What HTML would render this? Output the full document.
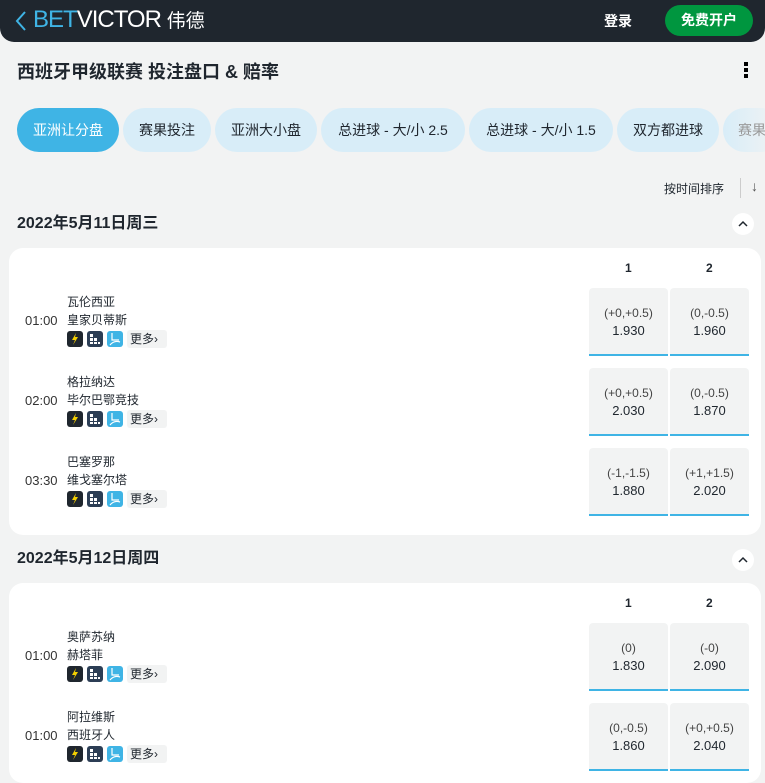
<!DOCTYPE html>
<html><head><meta charset="utf-8"><style>
*{margin:0;padding:0;box-sizing:border-box}
body{width:765px;height:773px;overflow:hidden;background:#f2f3f3;font-family:"Liberation Sans","Noto Sans CJK SC",sans-serif;color:#1f262e;position:relative}
.a{position:absolute}
.hdr{left:0;top:0;width:765px;height:42px;background:#1f262e;border-radius:0 0 14px 14px}
.tab{position:absolute;top:108px;height:44px;border-radius:22px;background:#d8edf8;font-size:14px;line-height:44px;text-align:center;color:#1f262e}
.card{position:absolute;left:9px;width:752px;background:#fff;border-radius:14px}
.odd{position:absolute;width:79px;height:68px;background:#f2f3f3;border-radius:4px 4px 0 0;border-bottom:2px solid #3fb4e5;text-align:center;font-size:12px}
.odd .h{margin-top:18px;color:#444;line-height:14px}
.odd .v{margin-top:4px;font-size:13px;color:#1f262e;line-height:14px}
.team{position:absolute;left:67px;font-size:12px;line-height:14px}
.time{position:absolute;left:25px;font-size:13px;color:#333}
.ic{position:absolute;width:16px;height:16px;border-radius:3px}
.more{position:absolute;width:40px;height:18px;background:#f2f3f3;border-radius:3px;font-size:12px;line-height:18px;padding-left:3px}
.col{position:absolute;font-size:12px;font-weight:bold}
.circ{position:absolute;width:22px;height:22px;border-radius:11px;background:#fff}
</style></head><body>
<div class="a hdr"></div>
<svg class="a" style="left:14px;top:10px" width="14" height="22"><path d="M11 2 L3 11 L11 20" stroke="#3fb4e5" stroke-width="2" fill="none"/></svg>
<div class="a" style="left:33px;top:6px;font-size:24px;line-height:28px;letter-spacing:-1px;color:#3fb4e5">BET<span style="color:#fff">VICTOR</span> <span style="font-size:19px;color:#fff;letter-spacing:0">伟德</span></div>
<div class="a" style="left:604px;top:11px;color:#fff;font-weight:bold;font-size:14px">登录</div>
<div class="a" style="left:665px;top:5px;width:88px;height:31px;border-radius:16px;background:#00963f;color:#fff;font-weight:bold;font-size:14px;line-height:31px;text-align:center">免费开户</div>
<div class="a" style="left:17px;top:58px;font-size:18px;font-weight:bold">西班牙甲级联赛 投注盘口 &amp; 赔率</div>
<div class="a" style="left:744px;top:62px;width:4px;height:4px;background:#000;box-shadow:0 6px 0 #000,0 12px 0 #000"></div>
<div class="tab" style="left:17px;width:102px;background:#3fb4e5;color:#fff">亚洲让分盘</div>
<div class="tab" style="left:123px;width:88px">赛果投注</div>
<div class="tab" style="left:215px;width:102px">亚洲大小盘</div>
<div class="tab" style="left:321px;width:144px">总进球 - 大/小 2.5</div>
<div class="tab" style="left:469px;width:144px">总进球 - 大/小 1.5</div>
<div class="tab" style="left:617px;width:102px">双方都进球</div>
<div class="tab" style="left:723px;width:60px;text-align:left;padding-left:15px;color:#999;background:linear-gradient(90deg,#d8edf8,#f2f3f3)">赛果</div>
<div class="a" style="left:664px;top:180px;font-size:12px">按时间排序</div>
<div class="a" style="left:740px;top:178px;width:1px;height:20px;background:#ccc"></div>
<div class="a" style="left:751px;top:178px;font-size:14px;color:#555">↓</div>

<div class="a" style="left:17px;top:209px;font-size:16px;font-weight:bold">2022年5月11日周三</div>
<div class="circ" style="left:732px;top:213px"><svg width="22" height="22"><path d="M7 13 L11 9 L15 13" stroke="#1f262e" stroke-width="1.5" fill="none"/></svg></div>
<div class="card" style="top:248px;height:287px"></div>
<div class="col" style="left:625px;top:261px">1</div>
<div class="col" style="left:706px;top:261px">2</div>

<div class="a" style="left:0;top:583px;width:765px;height:200px"><div class="card" style="top:0;height:200px"></div></div>
<div class="a" style="left:17px;top:544px;font-size:16px;font-weight:bold">2022年5月12日周四</div>
<div class="circ" style="left:732px;top:549px"><svg width="22" height="22"><path d="M7 13 L11 9 L15 13" stroke="#1f262e" stroke-width="1.5" fill="none"/></svg></div>
<div class="col" style="left:625px;top:596px">1</div>
<div class="col" style="left:706px;top:596px">2</div>

<div id="rows"></div>
<script>
var R=[[288,"瓦伦西亚","皇家贝蒂斯","01:00","(+0,+0.5)","1.930","(0,-0.5)","1.960"],
[368,"格拉纳达","毕尔巴鄂竞技","02:00","(+0,+0.5)","2.030","(0,-0.5)","1.870"],
[448,"巴塞罗那","维戈塞尔塔","03:30","(-1,-1.5)","1.880","(+1,+1.5)","2.020"],
[623,"奥萨苏纳","赫塔菲","01:00","(0)","1.830","(-0)","2.090"],
[703,"阿拉维斯","西班牙人","01:00","(0,-0.5)","1.860","(+0,+0.5)","2.040"]];
var h="";
R.forEach(function(r){var t=r[0];
h+='<div class="team" style="top:'+(t+7)+'px">'+r[1]+'</div><div class="team" style="top:'+(t+25)+'px">'+r[2]+'</div>';
h+='<div class="time" style="top:'+(t+25)+'px">'+r[3]+'</div>';
h+='<div class="ic" style="left:67px;top:'+(t+43)+'px;background:#1f262e"><svg width="16" height="16"><path d="M9 2 L5 9 L8 9 L6 14 L11 6 L8 6 Z" fill="#f5d000"/></svg></div>';
h+='<div class="ic" style="left:87px;top:'+(t+43)+'px;background:#2c3e55"><svg width="16" height="16" fill="#fff"><rect x="3" y="3" width="3" height="3"/><rect x="3" y="7" width="3" height="3"/><rect x="7" y="7" width="3" height="3"/><rect x="3" y="11" width="3" height="2"/><rect x="7" y="11" width="3" height="2"/><rect x="11" y="11" width="2" height="2"/></svg></div>';
h+='<div class="ic" style="left:107px;top:'+(t+43)+'px;background:#3fb4e5"><svg width="16" height="16" fill="none" stroke="#fff" stroke-width="1.2"><path d="M5 2 V9 H12"/><path d="M3 14 Q7 9 13 11"/></svg></div>';
h+='<div class="more" style="left:127px;top:'+(t+42)+'px">更多›</div>';
h+='<div class="odd" style="left:589px;top:'+t+'px"><div class="h">'+r[4]+'</div><div class="v">'+r[5]+'</div></div>';
h+='<div class="odd" style="left:670px;top:'+t+'px"><div class="h">'+r[6]+'</div><div class="v">'+r[7]+'</div></div>';
});
document.getElementById("rows").innerHTML=h;
</script>
</body></html>
